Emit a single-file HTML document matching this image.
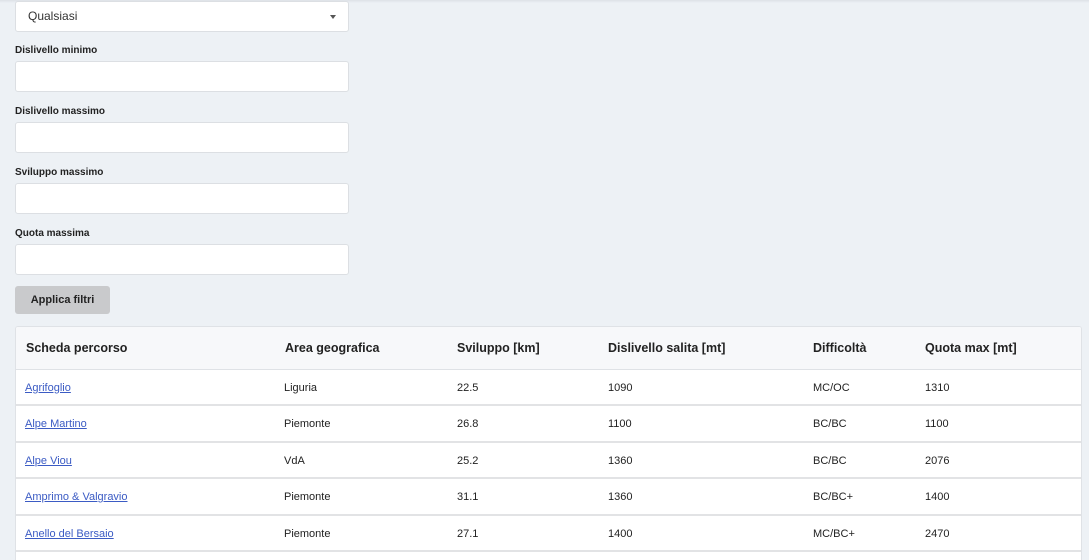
<!DOCTYPE html>
<html><head><meta charset="utf-8"><style>
*{margin:0;padding:0;box-sizing:border-box}
html{width:1089px;height:560px;overflow:hidden}
body{width:1089px;height:560px;overflow:hidden;background:#edf1f5;font-family:"Liberation Sans",Arial,sans-serif;color:#212529;position:relative}
.topbar{position:absolute;left:0;top:0;width:1089px;height:3px;background:linear-gradient(#dde1e6,#edf1f5)}
.sel,.inp{position:absolute;left:15px;width:334px;height:31px;background:#fff;border:1px solid #dcdfe3;border-radius:3px}
.sel span{position:absolute;left:12px;top:7px;font-size:12px;color:#333}
.sel i{position:absolute;right:12px;top:13px;border-left:3.5px solid transparent;border-right:3.5px solid transparent;border-top:4px solid #555}
.lbl{position:absolute;left:15px;font-size:10px;font-weight:bold;color:#222}
.btn{position:absolute;left:15px;top:286px;width:95px;height:28px;background:#c9cacc;border-radius:3px;font-size:11px;font-weight:bold;color:#222;text-align:center;line-height:28px}
.tbl{position:absolute;left:15px;top:326px;width:1067px;height:234px;background:#fff;border:1px solid #dfe2e6;border-bottom:none;border-radius:3px 3px 0 0;overflow:hidden}
.hd{position:absolute;left:0;top:0;width:100%;height:43px;background:#f7f8fa;border-bottom:1px solid #dfe2e6}
.c{position:absolute;font-size:11px;color:#222;white-space:nowrap}
.h{font-size:12.5px;font-weight:bold;top:14px}
.row{position:absolute;left:0;width:100%;height:36.4px;border-bottom:2px solid #e2e3e5}
.row .c{top:12px}
a{color:#3b5bc4;text-decoration:underline}
</style></head><body>
<div class="topbar"></div>
<div class="sel" style="top:1px"><span>Qualsiasi</span><i></i></div>
<div class="lbl" style="top:45px">Dislivello minimo</div>
<div class="inp" style="top:61px"></div>
<div class="lbl" style="top:106px">Dislivello massimo</div>
<div class="inp" style="top:122px"></div>
<div class="lbl" style="top:167px">Sviluppo massimo</div>
<div class="inp" style="top:183px"></div>
<div class="lbl" style="top:228px">Quota massima</div>
<div class="inp" style="top:244px"></div>
<div class="btn">Applica filtri</div>
<div class="tbl">
<div class="hd">
<div class="c h" style="left:10px">Scheda percorso</div>
<div class="c h" style="left:269px">Area geografica</div>
<div class="c h" style="left:441px">Sviluppo [km]</div>
<div class="c h" style="left:592px">Dislivello salita [mt]</div>
<div class="c h" style="left:797px">Difficoltà</div>
<div class="c h" style="left:909px">Quota max [mt]</div>
</div>
<div class="row" style="top:43px"><div class="c" style="left:9px"><a>Agrifoglio</a></div><div class="c" style="left:268px">Liguria</div><div class="c" style="left:441px">22.5</div><div class="c" style="left:592px">1090</div><div class="c" style="left:797px">MC/OC</div><div class="c" style="left:909px">1310</div></div>
<div class="row" style="top:79.4px"><div class="c" style="left:9px"><a>Alpe Martino</a></div><div class="c" style="left:268px">Piemonte</div><div class="c" style="left:441px">26.8</div><div class="c" style="left:592px">1100</div><div class="c" style="left:797px">BC/BC</div><div class="c" style="left:909px">1100</div></div>
<div class="row" style="top:115.8px"><div class="c" style="left:9px"><a>Alpe Viou</a></div><div class="c" style="left:268px">VdA</div><div class="c" style="left:441px">25.2</div><div class="c" style="left:592px">1360</div><div class="c" style="left:797px">BC/BC</div><div class="c" style="left:909px">2076</div></div>
<div class="row" style="top:152.2px"><div class="c" style="left:9px"><a>Amprimo &amp; Valgravio</a></div><div class="c" style="left:268px">Piemonte</div><div class="c" style="left:441px">31.1</div><div class="c" style="left:592px">1360</div><div class="c" style="left:797px">BC/BC+</div><div class="c" style="left:909px">1400</div></div>
<div class="row" style="top:188.6px"><div class="c" style="left:9px"><a>Anello del Bersaio</a></div><div class="c" style="left:268px">Piemonte</div><div class="c" style="left:441px">27.1</div><div class="c" style="left:592px">1400</div><div class="c" style="left:797px">MC/BC+</div><div class="c" style="left:909px">2470</div></div>
</div>
</body></html>
